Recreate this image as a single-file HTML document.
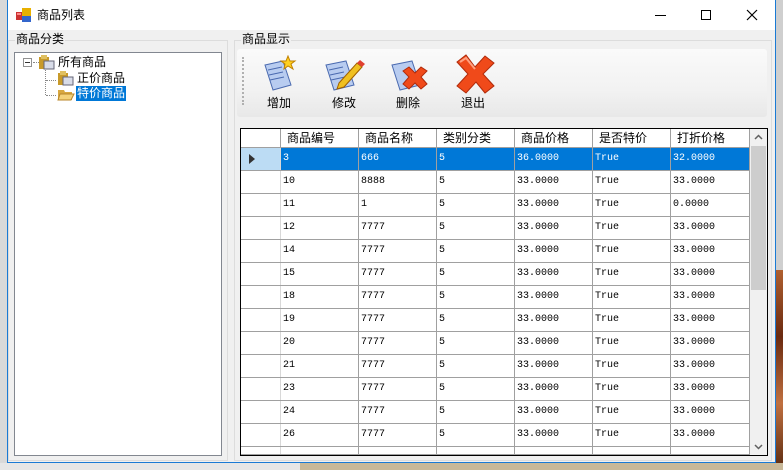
<!DOCTYPE html>
<html><head><meta charset="utf-8"><style>
*{margin:0;padding:0;box-sizing:border-box}
body{width:783px;height:470px;overflow:hidden;background:#d9d9d9;position:relative;font-family:"Liberation Sans","Noto Sans CJK SC",sans-serif;font-size:12px;color:#000}
.a{position:absolute}
.cj{font-family:"Noto Sans CJK SC","WenQuanYi Zen Hei",sans-serif;font-size:12px;line-height:14px}
.row{position:absolute;left:241px;width:509px;height:23px;border-bottom:1px solid #a0a0a0}
.c{position:absolute;top:0;height:22px;line-height:22px;padding-left:2px;border-right:1px solid #a0a0a0;font-family:"Liberation Mono","SimSun",monospace;font-size:10px;white-space:nowrap;overflow:hidden}
.h{position:absolute;top:0;height:19px;line-height:18px;padding-left:6px;border-right:1px solid #a0a0a0;font-family:"Noto Sans CJK SC",sans-serif;font-size:12px}
</style></head><body>
<div class="a" style="left:776px;top:0;width:7px;height:470px;background:#cfcfcf"></div>
<div class="a" style="left:776px;top:270px;width:7px;height:200px;background:linear-gradient(#b06030,#6a2a10,#c07040,#5a2a10)"></div>
<div class="a" style="left:0;top:463px;width:783px;height:7px;background:#e6e6e6"></div>
<div class="a" style="left:300px;top:463px;width:483px;height:7px;background:#c8b898"></div>
<div class="a" style="left:7px;top:0;width:769px;height:463px;border:1px solid #1a7ad4;background:#f0f0f0"></div>
<div class="a" style="left:8px;top:0;width:767px;height:30px;background:#fff"></div>
<svg class="a" style="left:16px;top:8px" width="16" height="14"><rect x="0" y="4" width="6" height="8" fill="#c33"/><rect x="1" y="5" width="4" height="2" fill="#f88"/><rect x="6" y="0" width="9" height="8" fill="#e8b000"/><rect x="6" y="8" width="9" height="6" fill="#36c"/></svg>
<div class="a cj" style="left:37px;top:8px;font-size:12px">商品列表</div>
<div class="a" style="left:655px;top:15px;width:11px;height:1px;background:#000"></div>
<div class="a" style="left:701px;top:10px;width:10px;height:10px;border:1px solid #000"></div>
<svg class="a" style="left:746px;top:9px" width="12" height="12"><path d="M1 1L11 11M11 1L1 11" stroke="#000" stroke-width="1.2"/></svg>
<div class="a" style="left:8px;top:40px;width:220px;height:421px;border:1px solid #dcdcdc"></div>
<div class="a cj" style="left:15px;top:32px;background:#f0f0f0;padding:0 1px">商品分类</div>
<div class="a" style="left:14px;top:52px;width:208px;height:404px;background:#fff;border:1px solid #828790"></div>
<div class="a" style="left:23px;top:58px;width:9px;height:9px;border:1px solid #919191;background:#fff"></div>
<div class="a" style="left:25px;top:62px;width:5px;height:1px;background:#333"></div>
<div class="a" style="left:33px;top:62px;width:6px;border-top:1px dotted #888"></div>
<div class="a" style="left:45px;top:70px;height:25px;border-left:1px dotted #888"></div>
<div class="a" style="left:46px;top:80px;width:10px;border-top:1px dotted #888"></div>
<div class="a" style="left:46px;top:95px;width:10px;border-top:1px dotted #888"></div>
<svg class="a" style="left:38px;top:54px" width="18" height="16"><rect x="1" y="3" width="10" height="12" fill="#c89a2a"/><rect x="3" y="1" width="6" height="4" fill="#e0c060"/><rect x="6" y="7" width="10" height="8" fill="#d8dce8" stroke="#667"/></svg>
<div class="a cj" style="left:58px;top:55px">所有商品</div>
<svg class="a" style="left:57px;top:70px" width="18" height="16"><rect x="1" y="3" width="10" height="12" fill="#c89a2a"/><rect x="3" y="1" width="6" height="4" fill="#e0c060"/><rect x="6" y="7" width="10" height="8" fill="#d8dce8" stroke="#667"/></svg>
<div class="a cj" style="left:77px;top:71px">正价商品</div>
<svg class="a" style="left:57px;top:86px" width="18" height="16"><path d="M1 4h6l1 2h7v8H1z" fill="#d8a840"/><path d="M3 8h14l-3 6H1z" fill="#f4d27a" stroke="#b8862a"/></svg>
<div class="a cj" style="left:76px;top:86px;background:#0078d7;color:#fff;padding:0 1px;height:15px">特价商品</div>
<div class="a" style="left:234px;top:40px;width:538px;height:421px;border:1px solid #dcdcdc"></div>
<div class="a cj" style="left:241px;top:32px;background:#f0f0f0;padding:0 1px">商品显示</div>
<div class="a" style="left:237px;top:49px;width:530px;height:68px;background:linear-gradient(#fafafa,#f2f2f2 60%,#e8e8e8);border-radius:3px"></div>
<div class="a" style="left:242px;top:57px;height:48px;border-left:2px dotted #b0b0b0"></div>
<svg class="a" style="left:262px;top:55px" width="36" height="38"><path d="M3 10l18-4 8 24-18 5z" fill="#b8ccf0" stroke="#4a6ab0"/><path d="M6 15l14-3M7 20l14-3M8 25l14-3" stroke="#4a6ab0"/><path d="M26 1l2 5 5 0-4 3 2 5-5-3-4 3 1-5-4-3 5 0z" fill="#ffd020" stroke="#c08000"/></svg>
<div class="a cj" style="left:267px;top:96px">增加</div>
<svg class="a" style="left:323px;top:55px" width="42" height="38"><path d="M3 10l20-4 8 24-20 5z" fill="#b8ccf0" stroke="#4a6ab0"/><path d="M6 15l14-3M7 20l14-3M8 25l14-3" stroke="#4a6ab0"/><path d="M16 28l18-20 5 4-18 20-7 2z" fill="#f0c020" stroke="#a06000"/><path d="M34 8l3-3 5 4-3 3z" fill="#e04030"/></svg>
<div class="a cj" style="left:332px;top:96px">修改</div>
<svg class="a" style="left:389px;top:55px" width="42" height="38"><path d="M3 10l20-4 8 24-20 5z" fill="#b8ccf0" stroke="#4a6ab0"/><path d="M14 16l6-4 6 6 6-6 6 4-6 6 6 7-6 5-6-6-6 6-6-5 6-7z" fill="#f04a1a" stroke="#b02a0a"/></svg>
<div class="a cj" style="left:396px;top:96px">删除</div>
<svg class="a" style="left:454px;top:54px" width="42" height="40"><path d="M3 8l9-7 9 12 10-11 9 7-11 11 11 12-9 7-9-11-10 11-9-7 11-12z" fill="#f04a1a" stroke="#b02a0a"/><path d="M6 8l6-4 9 11" stroke="#ffa080" fill="none" stroke-width="2"/></svg>
<div class="a cj" style="left:461px;top:96px">退出</div>
<div class="a" style="left:240px;top:128px;width:528px;height:328px;border:1px solid #000;background:#fff;overflow:hidden"></div>
<div class="a" style="left:241px;top:129px;width:509px;height:19px;border-bottom:1px solid #a0a0a0">
<div class="h" style="left:0;width:40px"></div>
<div class="h" style="left:40px;width:78px">商品编号</div>
<div class="h" style="left:118px;width:78px">商品名称</div>
<div class="h" style="left:196px;width:78px">类别分类</div>
<div class="h" style="left:274px;width:78px">商品价格</div>
<div class="h" style="left:352px;width:78px">是否特价</div>
<div class="h" style="left:430px;width:79px">打折价格</div>
</div>
<div id="rows"></div>
<script>
var d=[["3","666","36.0000","32.0000"],["10","8888","33.0000","33.0000"],["11","1","33.0000","0.0000"],["12","7777"],["14","7777"],["15","7777"],["18","7777"],["19","7777"],["20","7777"],["21","7777"],["23","7777"],["24","7777"],["26","7777"],["",""]];
var h="";
d.forEach(function(r,i){var y=148+i*23;var sel=i==0;var bg=sel?"#0078d7":"#fff",fg=sel?"#fff":"#000";
h+='<div class="row" style="top:'+y+'px;height:'+(i==13?8:23)+'px;overflow:hidden"><div class="c" style="left:0;width:40px;background:'+(sel?"#bcdcf4":"#fff")+';border-right-color:#d8d8d8">'+(sel?'<svg width="8" height="10" style="margin:6px 0 0 5px"><path d="M1 0v10l6-5z" fill="#333"/></svg>':'')+'</div>';
var v=i==13?["","","","","",""]:[r[0],r[1],"5",r[2]||"33.0000","True",r[3]||"33.0000"];
for(var k=0;k<6;k++){h+='<div class="c" style="left:'+(40+78*k)+'px;width:'+(k==5?79:78)+'px;background:'+bg+';color:'+fg+'">'+v[k]+'</div>';}
h+='</div>';});
document.getElementById("rows").innerHTML=h;
</script>
<div class="a" style="left:750px;top:129px;width:17px;height:326px;background:#f0f0f0"></div>
<div class="a" style="left:751px;top:146px;width:15px;height:144px;background:#cdcdcd"></div>
<svg class="a" style="left:754px;top:134px" width="9" height="6"><path d="M1 5l3.5-3.5L8 5" stroke="#606060" fill="none" stroke-width="1.5"/></svg>
<svg class="a" style="left:754px;top:444px" width="9" height="6"><path d="M1 1l3.5 3.5L8 1" stroke="#606060" fill="none" stroke-width="1.5"/></svg>
</body></html>
